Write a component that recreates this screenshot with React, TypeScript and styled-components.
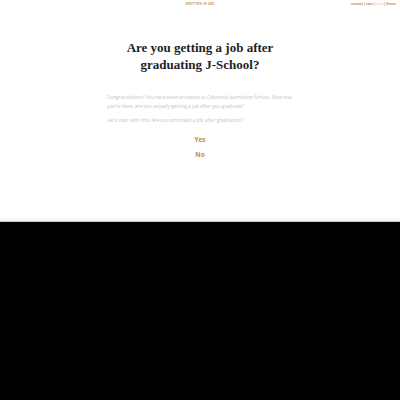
import React from "react";
import styled, { createGlobalStyle } from "styled-components";

const Global = createGlobalStyle`
  html, body { margin: 0; padding: 0; background: #000; }
  body { font-family: "Open Sans", "Liberation Sans", sans-serif; }
`;

const Page = styled.div`
  background: #fff;
  height: 218px;
  position: relative;
  display: flex;
  flex-direction: column;
  align-items: center;
`;

const Band = styled.div`
  height: 3px;
  background: #f7f7f7;
  border-bottom: 1px solid #c8c8c8;
`;

const TopBar = styled.div`
  width: 100%;
  height: 8px;
  display: flex;
  justify-content: center;
  align-items: center;
  position: relative;
`;

const Brand = styled.div`
  font-family: "Liberation Sans", Arial, sans-serif;
  font-size: 3.4px;
  font-weight: 700;
  letter-spacing: 0.15px;
  color: #c9a25a;
`;

const Nav = styled.div`
  position: absolute;
  right: 4px;
  top: 2px;
  font-family: "Liberation Sans", Arial, sans-serif;
  font-size: 3.4px;
  font-weight: 700;
  color: #c08a4a;
`;

const Dim = styled.span`
  color: #ddd;
`;

const Title = styled.h1`
  margin: 31px 0 0;
  font-family: "Liberation Serif", "DejaVu Serif", serif;
  font-weight: 700;
  font-size: 13px;
  line-height: 17px;
  text-align: center;
  color: #1e1e1e;
`;

const Body = styled.div`
  width: 186px;
  margin-top: 20px;
  font-family: "Open Sans", "Liberation Sans", sans-serif;
  font-size: 4.8px;
  line-height: 9px;
  color: #c4c4c4;
`;

const Para = styled.p`
  margin: 0 0 5px;
`;

const Choice = styled.div`
  margin-top: ${(p: { $top: number }) => p.$top}px;
  font-family: "Open Sans", "Liberation Sans", sans-serif;
  font-weight: 700;
  font-size: 6.5px;
  color: #c28a45;
`;

export default function App() {
  return (
    <>
      <Global />
      <Page>
        <TopBar>
          <Brand>WRITTEN IN SMI</Brand>
          <Nav>
            contact | save | <Dim>load</Dim> | theme
          </Nav>
        </TopBar>
        <Title>
          Are you getting a job after
          <br />
          graduating J-School?
        </Title>
        <Body>
          <Para>
            Congratulations! You have been accepted to Columbia Journalism School. Now
            that you're here, are you actually getting a job after you graduate?
          </Para>
          <Para>Let's start with this! Are you promised a job after graduation?</Para>
        </Body>
        <Choice $top={5}>Yes</Choice>
        <Choice $top={6}>No</Choice>
      </Page>
      <Band />
    </>
  );
}
